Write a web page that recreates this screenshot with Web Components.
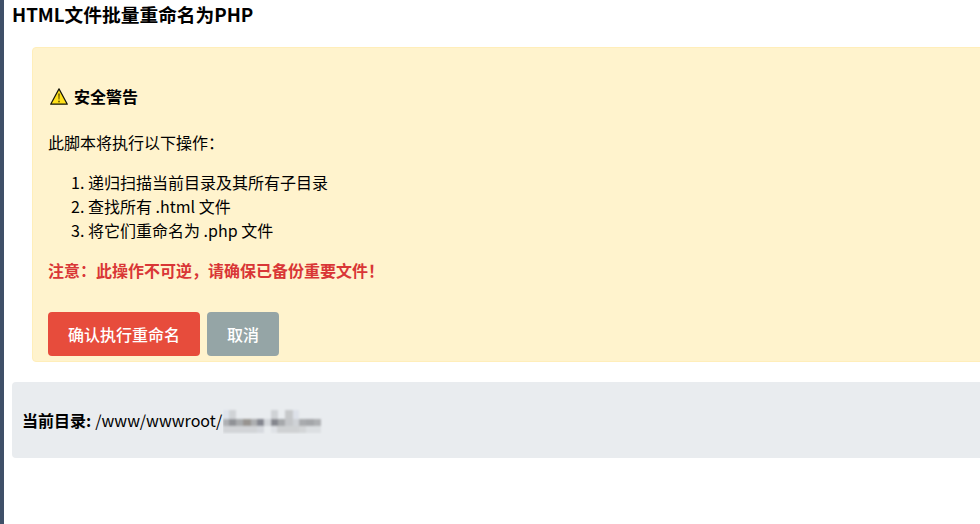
<!DOCTYPE html>
<html>
<head>
<meta charset="utf-8">
<title>HTML文件批量重命名为PHP</title>
<style>
    html, body { margin: 0; height: 100%; overflow: hidden; background: #fff; }
    body { font-family: "Noto Sans CJK SC", "Noto Sans", sans-serif; font-size: 16px; color: #000; }
</style>
</head>
<body>
<rename-page>
    <span slot="title">HTML文件批量重命名为PHP</span>
    <warning-box>
        <warn-title>安全警告</warn-title>
        <p>此脚本将执行以下操作：</p>
        <ol>
            <li>递归扫描当前目录及其所有子目录</li>
            <li>查找所有 .html 文件</li>
            <li>将它们重命名为 .php 文件</li>
        </ol>
        <p class="danger">注意：此操作不可逆，请确保已备份重要文件！</p>
        <div slot="actions">
            <action-button kind="confirm">确认执行重命名</action-button>
            <action-button kind="cancel">取消</action-button>
        </div>
    </warning-box>
    <dir-info>/www/wwwroot/</dir-info>
</rename-page>

<template id="rename-page">
    <style>
        :host { display: flex; height: 524px; }
        #bar { flex: 0 0 4px; background: #3f5068; }
        #main { flex: 0 0 1200px; padding: 0 8px; box-sizing: border-box; }
        h1 { margin: 0; font-size: 18.72px; line-height: 28px; font-weight: 700; }
        #rest { display: flex; flex-direction: column; gap: 20px; padding-top: 19px; }
    </style>
    <div id="bar"></div>
    <div id="main">
        <h1><slot name="title"></slot></h1>
        <div id="rest"><slot></slot></div>
    </div>
</template>

<template id="warning-box">
    <style>
        :host { display: block; margin-left: 20px; padding: 0 15px 5px; background: #fff3cd; border: 1px solid #ffeeba; border-radius: 4px; }
        ::slotted(p) { margin: 0; line-height: 24px; }
        ::slotted(ol) { margin: 16px 0 0; padding: 0 0 0 40px; line-height: 24px; }
        ::slotted(.danger) { margin-top: 16px; color: #d93636; font-weight: 700; }
        ::slotted([slot="actions"]) { display: flex; gap: 7px; margin-top: 30px; }
    </style>
    <slot name="head"></slot>
    <slot></slot>
    <slot name="actions"></slot>
</template>

<template id="warn-title">
    <style>
        :host { display: flex; align-items: center; gap: 6px; padding: 35px 0 21px; font-size: 16px; line-height: 26px; font-weight: 700; }
        svg { width: 18px; height: 17px; flex: none; margin-left: 2px; }
    </style>
    <svg viewBox="0 0 18 17">
        <path d="M9 .9 17.3 16.2H.7Z" fill="#ffe01a" stroke="#14140a" stroke-width="1.2" stroke-linejoin="round"/>
        <path d="M8.1 5.6h1.8l-.35 6h-1.1z" fill="#7a6500"/>
        <circle cx="9" cy="13.4" r="1" fill="#7a6500"/>
    </svg>
    <slot></slot>
</template>

<template id="action-button">
    <style>
        :host { display: inline-block; padding: 10px 20px; border-radius: 4px; font-size: 16px; line-height: 24px; font-weight: 500; color: #fff; }
        :host([kind="confirm"]) { background: #e74c3c; }
        :host([kind="cancel"]) { background: #95a5a6; }
    </style>
    <slot></slot>
</template>

<template id="dir-info">
    <style>
        :host { display: flex; align-items: center; height: 76px; padding: 0 10px; background: #e9ecef; border-radius: 4px; font-size: 16px; }
        b { font-weight: 700; margin-right: 4px; }
        svg { width: 100px; height: 28px; flex: none; margin-left: 1px; }
    </style>
    <b>当前目录:</b><slot></slot>
    <svg viewBox="0 0 100 28">
        <defs><filter id="blur" x="-5%" y="-20%" width="110%" height="140%"><feGaussianBlur stdDeviation="1"/></filter></defs>
        <g filter="url(#blur)">
            <!-- top row -->
            <rect x="0" y="4" width="7" height="9" fill="#dfe4ec"/>
            <rect x="6" y="4" width="7" height="9" fill="#d0d3d6"/>
            <rect x="48" y="4" width="7" height="9" fill="#cfd2d5"/>
            <rect x="62" y="4" width="8" height="9" fill="#c6c8ca"/>
            <rect x="70" y="4" width="6" height="9" fill="#dde1e9"/>
            <!-- middle row -->
            <rect x="0" y="13" width="6" height="7" fill="#aeb0b3"/>
            <rect x="6" y="13" width="7" height="7" fill="#909296"/>
            <rect x="13" y="13" width="7" height="7" fill="#a9abad"/>
            <rect x="20" y="13" width="8" height="7" fill="#989490"/>
            <rect x="28" y="13" width="6" height="7" fill="#adafb1"/>
            <rect x="34" y="13" width="7" height="7" fill="#84868f"/>
            <rect x="41" y="13" width="7" height="7" fill="#d3d6da"/>
            <rect x="48" y="13" width="7" height="7" fill="#85878e"/>
            <rect x="55" y="13" width="7" height="7" fill="#a6a8ab"/>
            <rect x="62" y="13" width="8" height="7" fill="#c4c6c9"/>
            <rect x="70" y="13" width="6" height="7" fill="#cfd2d6"/>
            <rect x="76" y="13" width="7" height="7" fill="#a9abae"/>
            <rect x="83" y="13" width="8" height="7" fill="#a4a6a9"/>
            <rect x="91" y="13" width="7" height="7" fill="#aeb0b3"/>
            <!-- bottom row -->
            <rect x="0" y="20" width="34" height="7" fill="#d2d4d7"/>
            <rect x="34" y="20" width="7" height="7" fill="#d6d9de"/>
            <rect x="48" y="20" width="6" height="7" fill="#dfe2e6"/>
            <rect x="54" y="20" width="22" height="7" fill="#cfd1d3"/>
            <rect x="76" y="20" width="7" height="7" fill="#d3d5d7"/>
            <rect x="83" y="20" width="15" height="7" fill="#dcdfe2"/>
        </g>
    </svg>
</template>

<script>
    class ShadowBase extends HTMLElement {
        constructor() {
            super()
            const template = document.getElementById(this.localName).content
            this.attachShadow({ mode: 'open' }).appendChild(template.cloneNode(true))
        }
    }

    class WarningBox extends ShadowBase {
        connectedCallback() {
            // heading goes in its own slot so markup order stays simple
            const head = this.querySelector('warn-title')
            if (head) head.slot = 'head'
        }
    }

    customElements.define('warn-title', class extends ShadowBase {})
    customElements.define('action-button', class extends ShadowBase {})
    customElements.define('dir-info', class extends ShadowBase {})
    customElements.define('warning-box', WarningBox)
    customElements.define('rename-page', class extends ShadowBase {})
</script>
</body>
</html>
